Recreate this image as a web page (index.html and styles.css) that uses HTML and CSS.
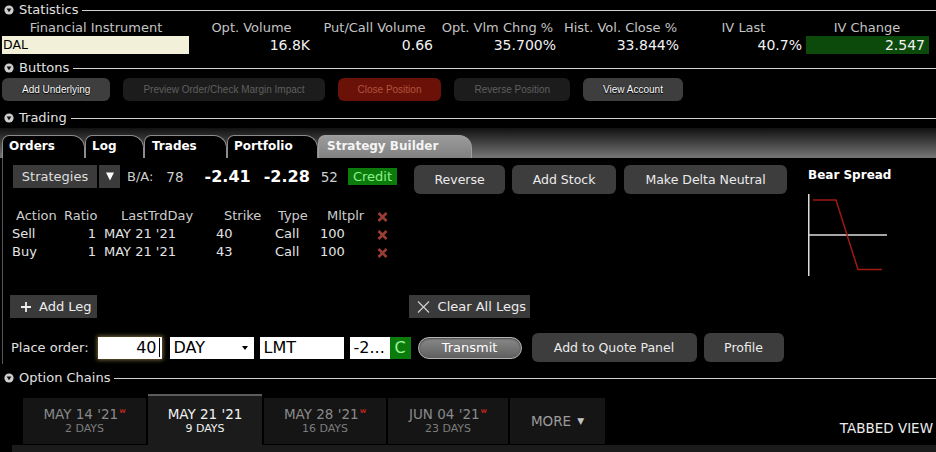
FILE: index.html
```html
<!DOCTYPE html>
<html lang="en">
<head>
  <meta charset="UTF-8">
  <title>Strategy Builder</title>
  <link rel="stylesheet" href="styles.css">
</head>
<body>

<div class="section-head">
  <svg class="toggle" width="10" height="10" viewBox="0 0 10 10"><circle cx="5" cy="5" r="4.6" fill="#cfcfcf"/><path d="M2.6 3.5h4.8L5 7.2z" fill="#111"/></svg>
  <span>Statistics</span>
  <i class="rule"></i>
</div>
<div class="stats">
  <div class="stats-label">Financial Instrument</div>
  <div class="stats-label">Opt. Volume</div>
  <div class="stats-label">Put/Call Volume</div>
  <div class="stats-label">Opt. Vlm Chng %</div>
  <div class="stats-label">Hist. Vol. Close %</div>
  <div class="stats-label">IV Last</div>
  <div class="stats-label">IV Change</div>
  <div class="stats-sym">DAL</div>
  <div class="stats-val">16.8K</div>
  <div class="stats-val">0.66</div>
  <div class="stats-val">35.700%</div>
  <div class="stats-val">33.844%</div>
  <div class="stats-val">40.7%</div>
  <div class="stats-val up">2.547</div>
</div>

<div class="section-head buttons-head">
  <svg class="toggle" width="10" height="10" viewBox="0 0 10 10"><circle cx="5" cy="5" r="4.6" fill="#cfcfcf"/><path d="M2.6 3.5h4.8L5 7.2z" fill="#111"/></svg>
  <span>Buttons</span>
  <i class="rule"></i>
</div>
<div class="toolbar">
  <button class="tb">Add Underlying</button>
  <button class="tb off">Preview Order/Check Margin Impact</button>
  <button class="tb danger">Close Position</button>
  <button class="tb off">Reverse Position</button>
  <button class="tb">View Account</button>
</div>

<div class="section-head trading-head">
  <svg class="toggle" width="10" height="10" viewBox="0 0 10 10"><circle cx="5" cy="5" r="4.6" fill="#cfcfcf"/><path d="M2.6 3.5h4.8L5 7.2z" fill="#111"/></svg>
  <span>Trading</span>
  <i class="rule"></i>
</div>
<div class="tabbar">
  <div class="tab tab-orders">Orders</div>
  <div class="tab tab-log">Log</div>
  <div class="tab tab-trades">Trades</div>
  <div class="tab tab-portfolio">Portfolio</div>
  <div class="tab active">Strategy Builder</div>
</div>

<div class="panel">
  <div class="builder">
    <div class="strat-row">
      <div class="quote">
        <div class="pick">Strategies</div>
        <div class="pick-arrow"><svg width="8" height="9" viewBox="0 0 8 9"><path d="M0 0.5h8L4 8.5z" fill="#fff"/></svg></div>
        <span class="ba">B/A:</span>
        <span class="size bid-size">78</span>
        <span class="px bid">-2.41</span>
        <span class="px ask">-2.28</span>
        <span class="size ask-size">52</span>
        <span class="credit">Credit</span>
      </div>
      <button class="act reverse-btn">Reverse</button>
      <button class="act stock-btn">Add Stock</button>
      <button class="act delta-btn">Make Delta Neutral</button>
    </div>

    <div class="legs-head">
      <span>Action</span>
      <span>Ratio</span>
      <span>LastTrdDay</span>
      <span>Strike</span>
      <span>Type</span>
      <span>Mltplr</span>
      <span class="del"><svg width="11" height="10" viewBox="0 0 11 10"><path d="M1.5 1l8 8M9.5 1l-8 8" stroke="#9c3d35" stroke-width="2.6"/></svg></span>
    </div>
    <div class="leg">
      <span>Sell</span>
      <span class="num">1</span>
      <span class="date">MAY 21 '21</span>
      <span>40</span>
      <span>Call</span>
      <span>100</span>
      <span class="del"><svg width="11" height="10" viewBox="0 0 11 10"><path d="M1.5 1l8 8M9.5 1l-8 8" stroke="#9c3d35" stroke-width="2.6"/></svg></span>
    </div>
    <div class="leg">
      <span>Buy</span>
      <span class="num">1</span>
      <span class="date">MAY 21 '21</span>
      <span>43</span>
      <span>Call</span>
      <span>100</span>
      <span class="del"><svg width="11" height="10" viewBox="0 0 11 10"><path d="M1.5 1l8 8M9.5 1l-8 8" stroke="#9c3d35" stroke-width="2.6"/></svg></span>
    </div>

    <div class="leg-actions">
      <button class="ghost add-leg"><svg width="10" height="10" viewBox="0 0 10 10"><path d="M5 0v10M0 5h10" stroke="#eee" stroke-width="1.8"/></svg>Add Leg</button>
      <button class="ghost clear-legs"><svg width="13" height="12" viewBox="0 0 13 12"><path d="M1 0.5l11 11M12 0.5l-11 11" stroke="#cfcfcf" stroke-width="1.2"/></svg>Clear All Legs</button>
    </div>

    <div class="order-row">
      <span class="order-label">Place order:</span>
      <div class="field qty">40<span class="cursor"></span></div>
      <div class="field tif">DAY<span class="caret"></span></div>
      <div class="field otype">LMT</div>
      <div class="field price">-2...</div>
      <div class="price-flag">C</div>
      <button class="pill">Transmit</button>
      <button class="act quote-btn">Add to Quote Panel</button>
      <button class="act profile-btn">Profile</button>
    </div>
  </div>

  <div class="payoff">
    <div class="payoff-title">Bear Spread</div>
    <svg class="payoff-chart" width="84" height="88" viewBox="0 0 84 88">
      <path d="M0.75 4V86M0 45H79" stroke="#dcdcdc" stroke-width="1.5" fill="none"/>
      <path d="M5 10H28L50 79.5H74" stroke="#9e1a12" stroke-width="1.5" fill="none"/>
    </svg>
  </div>
</div>

<div class="section-head chains-head">
  <svg class="toggle" width="10" height="10" viewBox="0 0 10 10"><circle cx="5" cy="5" r="4.6" fill="#cfcfcf"/><path d="M2.6 3.5h4.8L5 7.2z" fill="#111"/></svg>
  <span>Option Chains</span>
  <i class="rule"></i>
</div>
<div class="expiry">
  <div class="expiry-tabs">
    <div class="exp tab-1"><span class="exp-date">MAY 14 '21<sup class="wk">w</sup></span><span class="exp-days">2 DAYS</span></div>
    <div class="exp tab-2 current"><span class="exp-date">MAY 21 '21</span><span class="exp-days">9 DAYS</span></div>
    <div class="exp tab-3"><span class="exp-date">MAY 28 '21<sup class="wk">w</sup></span><span class="exp-days">16 DAYS</span></div>
    <div class="exp tab-4"><span class="exp-date">JUN 04 '21<sup class="wk">w</sup></span><span class="exp-days">23 DAYS</span></div>
    <div class="exp more">MORE <span class="more-arrow">&#9660;</span></div>
    <div class="view-mode">TABBED VIEW</div>
  </div>
  <div class="expiry-strip"></div>
</div>

</body>
</html>
```

FILE: styles.css
```css
* {
  box-sizing: border-box;
}
body {
  margin: 0;
  background: #000;
  color: #e6e6e6;
  font-family: "DejaVu Sans", sans-serif;
  font-size: 13px;
  overflow: hidden;
}
button {
  font-family: inherit;
  border: 0;
  padding: 0;
  cursor: pointer;
}

/* section headers */
.section-head {
  display: flex;
  align-items: center;
  height: 20px;
  padding-left: 4px;
  color: #e2e2e2;
  font-size: 13px;
  line-height: 20px;
}
.toggle {
  margin-right: 5px;
  flex: none;
}
.rule {
  flex: 1;
  height: 1px;
  margin-left: 4px;
  background: #d2d2d2;
}
.buttons-head {
  margin-top: 4px;
}
.trading-head {
  margin-top: 7px;
}
.chains-head {
  margin-top: 4px;
}

/* statistics */
.stats {
  display: grid;
  grid-template-columns: 188px repeat(5, 123px) 124px;
  grid-template-rows: 16px 18px;
  padding-left: 2px;
}
.stats-label {
  display: flex;
  justify-content: center;
  white-space: nowrap;
  color: #c4c4c4;
  line-height: 16px;
}
.stats-val {
  text-align: right;
  padding-right: 3px;
  font-size: 14px;
  line-height: 18px;
  color: #f2f2f2;
}
.stats-val.up {
  margin-left: 1px;
  padding-right: 4px;
  background: #0b4a0b;
}
.stats-sym {
  margin-right: 1px;
  padding-left: 1px;
  background: #f3f0da;
  color: #000;
  font-size: 12.5px;
  line-height: 18px;
}

/* buttons bar */
.toolbar {
  display: flex;
  gap: 13px;
  padding-left: 2px;
}
.tb {
  height: 23px;
  padding: 0 20px;
  border-radius: 6px;
  background: #3e3e3e;
  color: #fff;
  font-family: "Liberation Sans", sans-serif;
  font-size: 10px;
  text-shadow: 0 1px 1px #000, 0 0 1px #000;
}
.tb.off {
  background: #1c1c1c;
  color: #5f5f5f;
  text-shadow: none;
}
.tb.danger {
  background: #6a1207;
  color: #b3533f;
  text-shadow: none;
}

/* trading tabs */
.tabbar {
  display: flex;
  align-items: flex-end;
  height: 30px;
  padding-left: 2px;
  background: linear-gradient(#111, #767676);
}
.tab {
  height: 23px;
  padding-left: 6px;
  border: 1px solid #8c8c8c;
  border-bottom: 0;
  border-radius: 7px 13px 0 0;
  background: #000;
  color: #fff;
  font-size: 12px;
  font-weight: bold;
  line-height: 21px;
  white-space: nowrap;
}
.tab-orders { width: 83px; }
.tab-log { width: 59px; }
.tab-trades { width: 83px; padding-left: 7px; }
.tab-portfolio { width: 91px; }
.tab.active {
  width: 154px;
  padding-left: 8px;
  border-color: #a0a0a0;
  background: linear-gradient(#9b9b9b, #818181);
  color: #f4f4f4;
}

/* strategy builder panel */
.panel {
  display: flex;
  height: 206px;
  margin-left: 2px;
  border-left: 1px solid #555;
}
.builder {
  width: 805px;
  padding-top: 7px;
}
.strat-row {
  display: flex;
  align-items: flex-start;
  padding-left: 10px;
}
.quote {
  display: flex;
  align-items: center;
  height: 23px;
  color: #cfcfcf;
}
.pick {
  display: flex;
  align-items: center;
  height: 23px;
  width: 84px;
  justify-content: center;
  background: #3b3b3b;
  color: #dedede;
}
.pick-arrow {
  display: flex;
  align-items: center;
  justify-content: center;
  width: 21px;
  height: 23px;
  margin-left: 2px;
  background: #3b3b3b;
}
.ba {
  margin-left: 7px;
}
.size {
  font-size: 13.5px;
}
.bid-size {
  margin-left: 13px;
}
.px {
  color: #fff;
  font-size: 16px;
  font-weight: bold;
}
.bid {
  margin-left: 21px;
}
.ask {
  margin-left: 13px;
}
.ask-size {
  margin-left: 11px;
}
.credit {
  height: 17px;
  margin-left: 10px;
  padding: 0 5px;
  background: #0b7c0b;
  color: #8ef08e;
  line-height: 17px;
}
.act {
  height: 29px;
  border-radius: 6px;
  background: #3d3d3d;
  color: #ebebeb;
  font-size: 12.5px;
}
.reverse-btn {
  width: 91px;
  margin-left: 17px;
}
.stock-btn {
  width: 104px;
  margin-left: 7px;
}
.delta-btn {
  width: 163px;
  margin-left: 8px;
}

/* legs table */
.legs-head,
.leg {
  display: grid;
  line-height: 18px;
  white-space: nowrap;
}
.legs-head {
  grid-template-columns: 48px 57px 103px 54px 49px 50px 20px;
  margin-top: 13px;
  padding-left: 13px;
  color: #cdcdcd;
}
.leg {
  grid-template-columns: 72px 12px 120px 59px 45px 57px 20px;
  padding-left: 9px;
  color: #e4e4e4;
}
.leg .num {
  text-align: right;
}
.leg .date {
  padding-left: 8px;
}
.del svg {
  display: block;
  margin-top: 5px;
}

.leg-actions {
  display: flex;
  justify-content: space-between;
  width: 527px;
  margin-top: 34px;
  padding-left: 7px;
}
.ghost {
  display: flex;
  align-items: center;
  height: 23px;
  background: #3a3a3a;
  color: #ededed;
  font-size: 13px;
}
.add-leg {
  gap: 8px;
  padding: 0 5px 0 11px;
}
.clear-legs {
  gap: 8px;
  padding: 0 4px 0 8px;
}

/* place order row */
.order-row {
  display: flex;
  align-items: center;
  height: 29px;
  margin-top: 15px;
  padding-left: 8px;
}
.order-label {
  color: #e0e0e0;
}
.field {
  display: flex;
  align-items: center;
  height: 22px;
  padding-left: 4px;
  background: #fff;
  color: #000;
  font-size: 16px;
}
.qty {
  width: 64px;
  margin-left: 9px;
  justify-content: flex-end;
  padding-right: 2px;
  box-shadow: 0 0 4px 1px rgba(205, 175, 95, 0.6);
}
.cursor {
  width: 1px;
  height: 19px;
  margin-left: 2px;
  background: #000;
}
.tif {
  width: 84px;
  margin-left: 8px;
}
.caret {
  margin-left: auto;
  margin-right: 6px;
  border-top: 4px solid #000;
  border-left: 3.5px solid transparent;
  border-right: 3.5px solid transparent;
}
.otype {
  width: 84px;
  margin-left: 6px;
}
.price {
  width: 40px;
  margin-left: 6px;
}
.price-flag {
  width: 21px;
  height: 22px;
  background: #0b7c0b;
  color: #9cf59c;
  font-size: 16px;
  line-height: 22px;
  text-align: center;
}
.pill {
  width: 104px;
  height: 22px;
  margin-left: 7px;
  border: 1px solid #b4b4b4;
  border-radius: 11px;
  background: linear-gradient(#8a8a8a, #5f5f5f);
  box-shadow: inset 0 1px 2px rgba(0, 0, 0, 0.5);
  color: #fff;
  font-size: 13px;
}
.quote-btn {
  width: 165px;
  margin-left: 10px;
}
.profile-btn {
  width: 80px;
  margin-left: 7px;
}

/* payoff diagram */
.payoff {
  padding-top: 9px;
}
.payoff-title {
  color: #fff;
  font-size: 12px;
  font-weight: bold;
  line-height: 16px;
}
.payoff-chart {
  display: block;
  margin-top: 7px;
}

/* option chain expiries */
.expiry {
  margin-top: 6px;
  margin-left: 12px;
}
.expiry-tabs {
  display: flex;
  align-items: flex-end;
  height: 51px;
  padding-left: 11px;
}
.exp {
  display: flex;
  flex-direction: column;
  align-items: center;
  justify-content: center;
  height: 46px;
  margin: 0 2px 1px 0;
  background: #151515;
  color: #8a8a8a;
  white-space: nowrap;
}
.tab-1 { width: 123px; }
.tab-2 { width: 114px; }
.tab-3 { width: 122px; }
.tab-4 { width: 120px; }
.exp.current {
  height: 51px;
  margin-bottom: 0;
  padding-top: 1px;
  border-top: 2px solid #5c5c5c;
  background: #1b1b1b;
  color: #f2f2f2;
}
.exp-date {
  font-size: 13.5px;
  line-height: 15px;
}
.exp-days {
  font-size: 11px;
  line-height: 13px;
  color: #7c7c7c;
}
.current .exp-days {
  color: #f0f0f0;
}
.wk {
  margin-left: 1px;
  color: #b3261c;
  font-size: 7px;
  font-weight: bold;
  vertical-align: 6px;
  line-height: 0;
}
.exp.more {
  flex-direction: row;
  width: 95px;
  font-size: 13.5px;
  color: #9c9c9c;
}
.more-arrow {
  margin-left: 6px;
  font-size: 9px;
  color: #c4c4c4;
}
.view-mode {
  align-self: flex-end;
  margin: 0 3px 9px auto;
  color: #ededed;
  font-size: 13.5px;
  line-height: 16px;
}
.expiry-strip {
  height: 7px;
  background: #1b1b1b;
}
```
